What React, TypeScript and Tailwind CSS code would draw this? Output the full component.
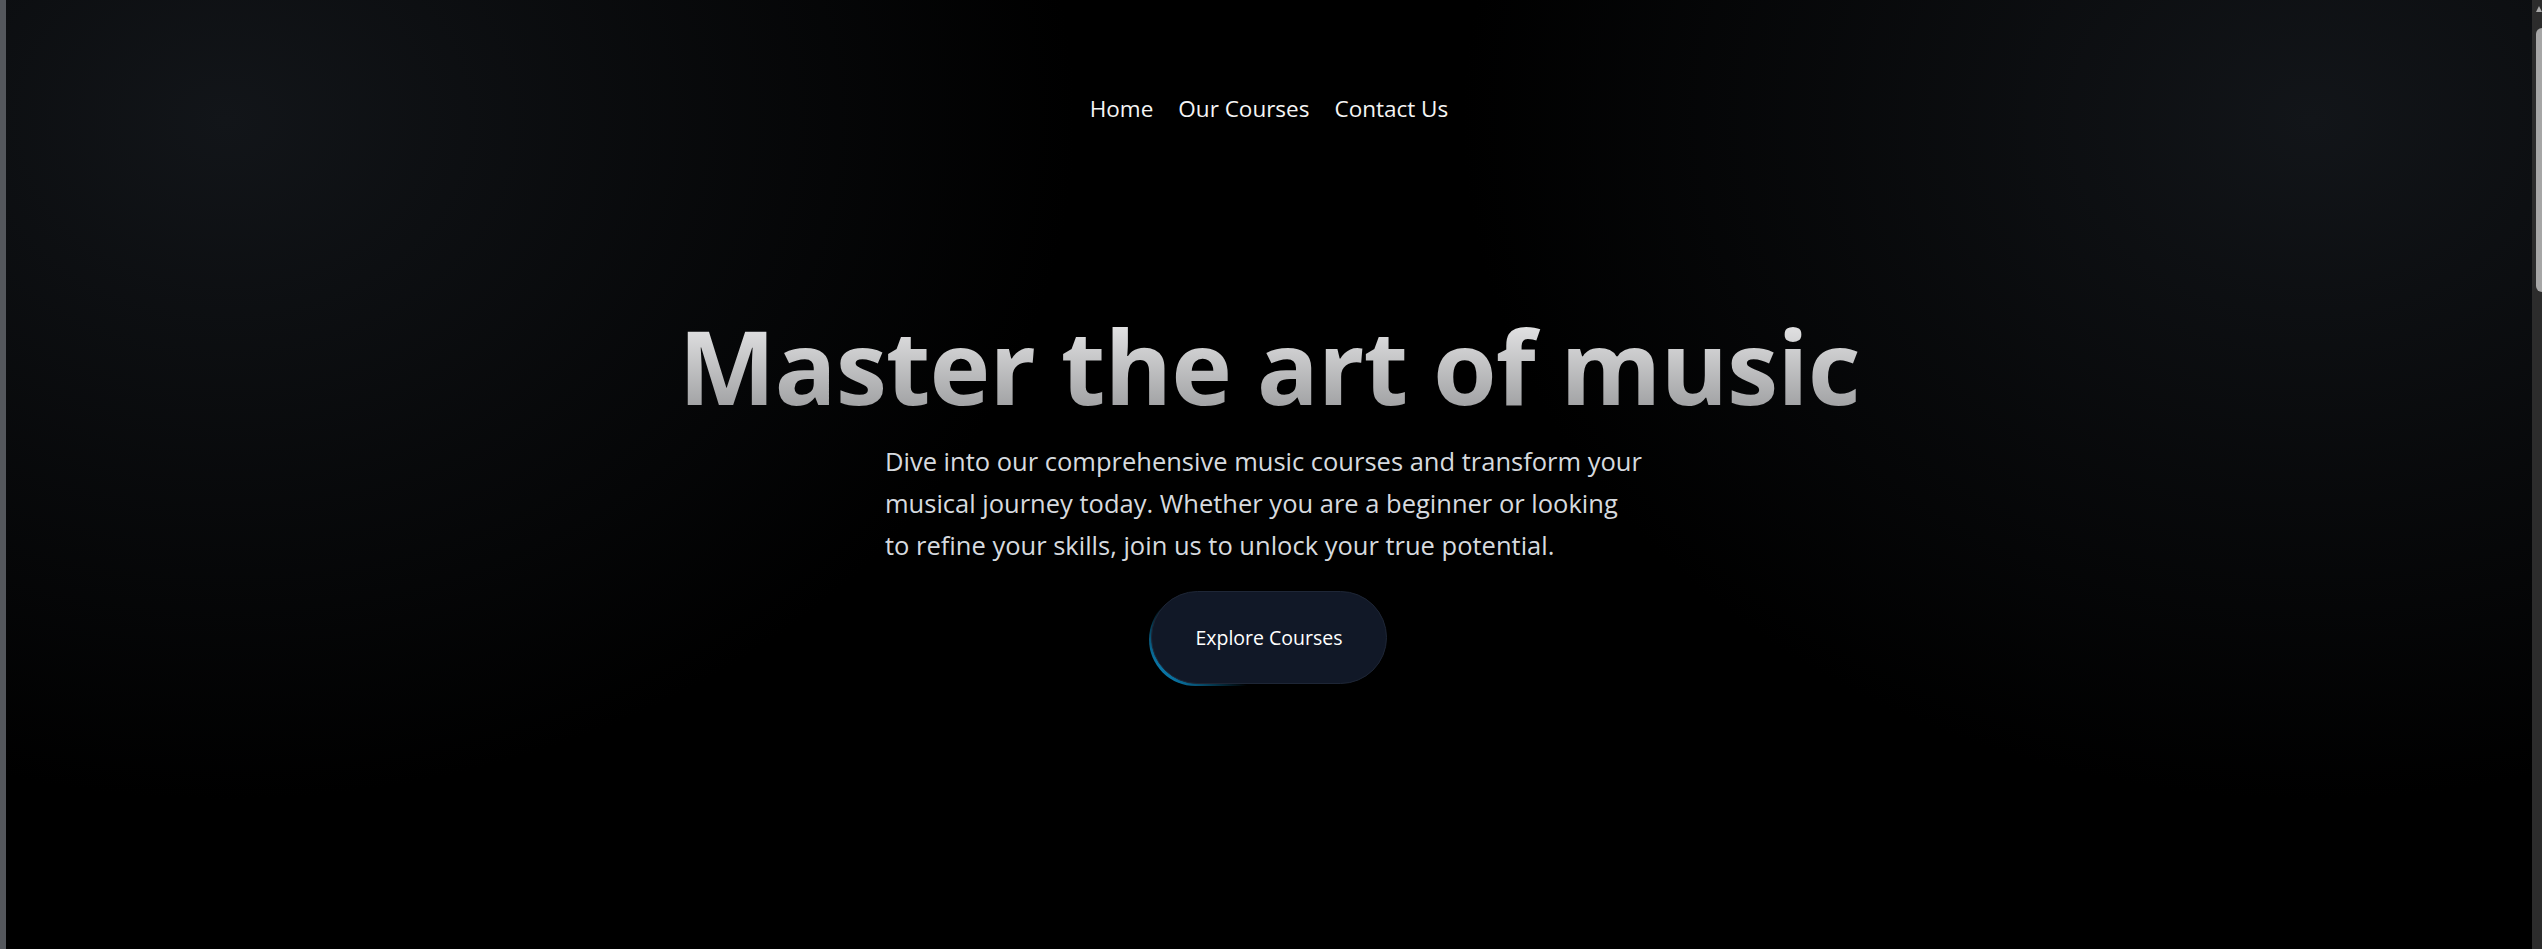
import React from "react";

const links = ["Home", "Our Courses", "Contact Us"];

const App = () => {
  return (
    <div className="flex h-[949px] w-full overflow-hidden bg-black font-['Open_Sans','Noto_Sans',sans-serif]">
      {/* window edge */}
      <div className="w-[6px] shrink-0 bg-[#54575c]" />

      <main className="flex flex-1 flex-col items-center bg-black bg-[radial-gradient(ellipse_850px_680px_at_220px_120px,#121519_0%,transparent_100%),radial-gradient(ellipse_850px_680px_at_calc(100%-220px)_120px,#121519_0%,transparent_100%)]">
        <nav className="flex gap-[25px] pt-[92px] text-[22.5px] leading-[33px] text-[#f5f5f5]">
          {links.map((l) => (
            <a key={l} href="#" className="hover:text-sky-400">
              {l}
            </a>
          ))}
        </nav>

        <section className="mt-[189px] flex w-full flex-col items-center">
          <h1 className="bg-gradient-to-b from-[#ebebec] to-[#9a9b9d] bg-clip-text text-[103px] font-bold leading-[103px] tracking-[-0.01em] text-transparent">
            Master the art of music
          </h1>

          <p className="mt-[23px] w-full max-w-3xl text-left text-[25.5px] leading-[42px] text-[#d6dadf]">
            Dive into our comprehensive music courses and transform your
            <br />
            musical journey today. Whether you are a beginner or looking
            <br />
            to refine your skills, join us to unlock your true potential.
          </p>

          <div className="relative mt-[25px]">
            <span className="absolute inset-0 -translate-x-[2px] translate-y-[2px] rounded-full bg-[linear-gradient(45deg,#0ea5e9_0%,transparent_30%)]" />
            <button className="relative flex h-[93px] w-[236px] items-center justify-center rounded-full border border-[#1e2636] bg-[#111827] text-[19.5px] text-white">
              Explore Courses
            </button>
          </div>
        </section>
      </main>

      {/* scrollbar */}
      <div className="flex w-[10px] shrink-0 flex-col items-end bg-[#2c2c2c]">
        <svg width="6" height="6" viewBox="0 0 6 6" className="mt-[6px]">
          <path d="M3 0 L6 6 L0 6 Z" fill="#a8a8a8" />
        </svg>
        <div className="mt-[16px] h-[264px] w-[6px] rounded-l-full bg-[#a6a6a6]" />
      </div>
    </div>
  );
};

export default App;
